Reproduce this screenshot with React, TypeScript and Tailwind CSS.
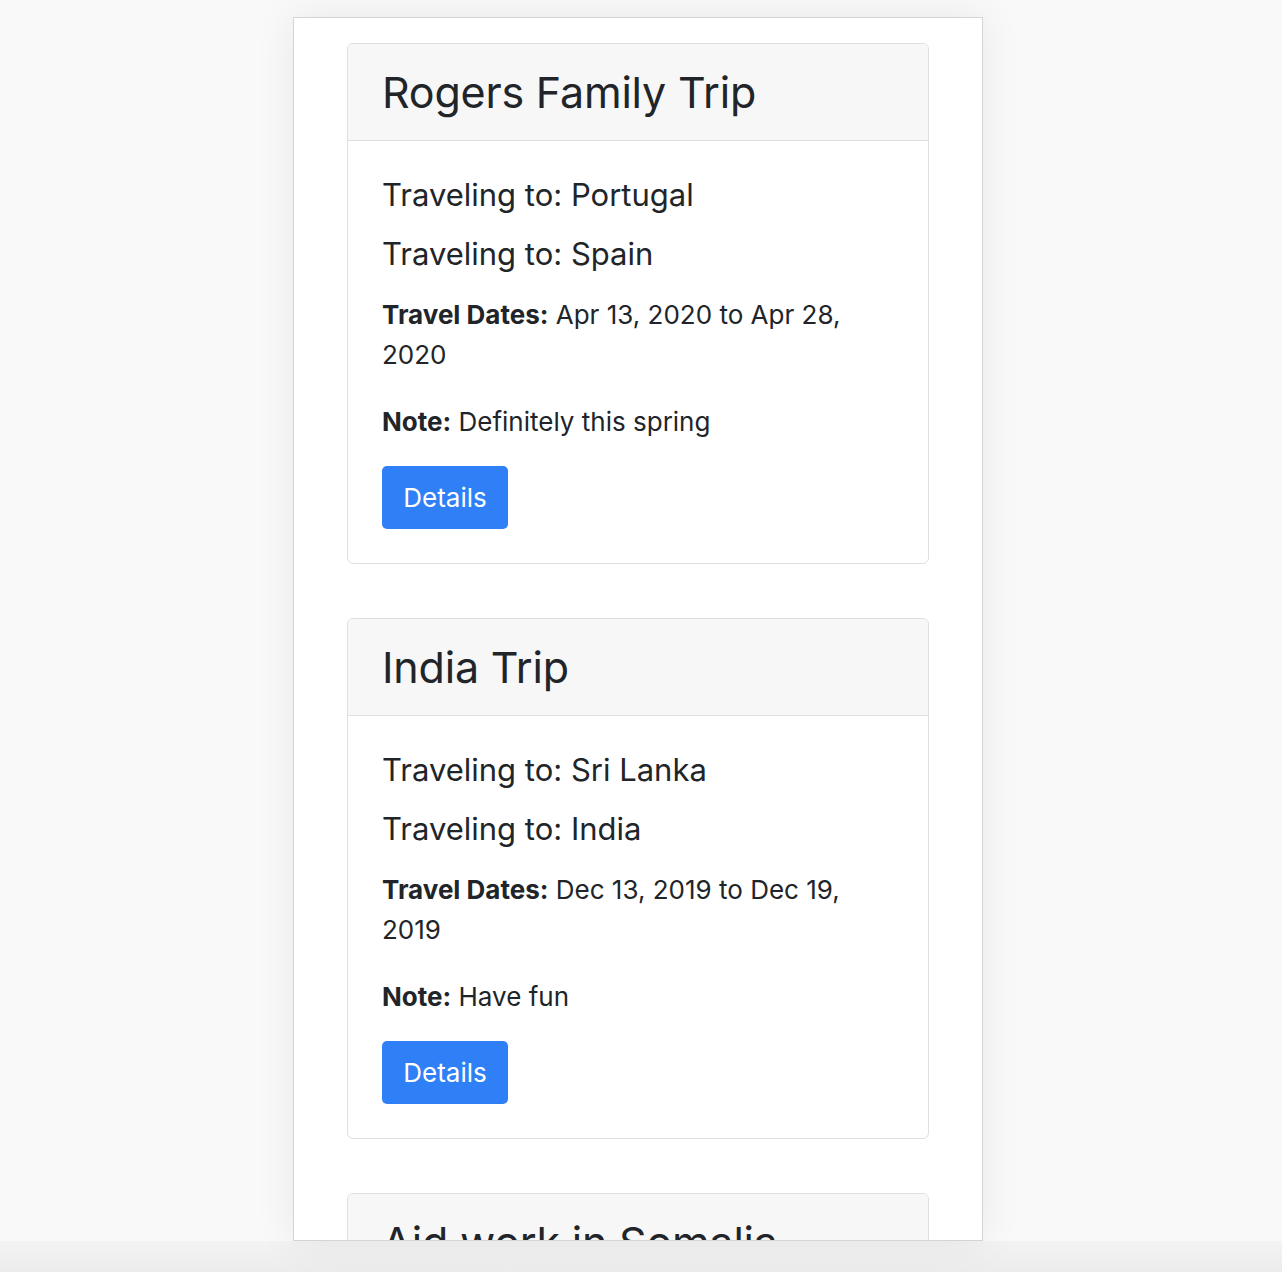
import React from "react";

type Trip = {
  title: string;
  places: string[];
  dates: string;
  note: string;
};

const trips: Trip[] = [
  {
    title: "Rogers Family Trip",
    places: ["Portugal", "Spain"],
    dates: "Apr 13, 2020 to Apr 28, 2020",
    note: "Definitely this spring",
  },
  {
    title: "India Trip",
    places: ["Sri Lanka", "India"],
    dates: "Dec 13, 2019 to Dec 19, 2019",
    note: "Have fun",
  },
  {
    title: "Aid work in Somalia",
    places: ["Somalia"],
    dates: "Jan 5, 2020 to Feb 2, 2020",
    note: "Bring supplies",
  },
];

function TripCard({ trip }: { trip: Trip }) {
  return (
    <div className="shrink-0 rounded-[6px] border border-[#dfdfdf] bg-white overflow-hidden">
      <div className="h-[97px] bg-[#f7f7f7] border-b border-[#dfdfdf] px-[34px] flex items-center">
        <h2 className="text-[43px] leading-[52px] text-[#212529] font-normal tracking-[-0.2px]">
          {trip.title}
        </h2>
      </div>
      <div className="px-[34px] pt-[36px] pb-[34px]">
        {trip.places.map((p) => (
          <div key={p} className="text-[31px] leading-[36px] mb-[23px] text-[#212529]">
            Traveling to: {p}
          </div>
        ))}
        <p className="text-[26px] leading-[40px] text-[#212529] mt-px">
          <strong className="font-bold">Travel Dates:</strong> {trip.dates}
        </p>
        <p className="text-[26px] leading-[40px] text-[#212529] mt-[27px]">
          <strong className="font-bold">Note:</strong> {trip.note}
        </p>
        <button className="mt-[24px] h-[63px] w-[126px] rounded-[5px] bg-[#2f7ff7] text-white text-[26px] leading-none">
          Details
        </button>
      </div>
    </div>
  );
}

export default function App() {
  return (
    <div
      className="min-h-[1272px] w-full bg-[#f9f9f9] flex flex-col items-start"
      style={{ fontFamily: "Inter, 'Noto Sans', sans-serif" }}
    >
      <div className="h-[17px] w-full shrink-0" />
      <div className="relative z-10 ml-[293px] w-[690px] h-[1224px] shrink-0 bg-white border border-[#d4d4d4] shadow-[0_0_40px_rgba(0,0,0,0.07)] overflow-hidden">
        <div className="px-[53px] pt-[25px] flex flex-col gap-[54px]">
          {trips.map((t) => (
            <TripCard key={t.title} trip={t} />
          ))}
        </div>
      </div>
      <div className="h-[31px] w-full shrink-0 bg-gradient-to-b from-[#f3f3f3] to-[#ececec]" />
    </div>
  );
}
